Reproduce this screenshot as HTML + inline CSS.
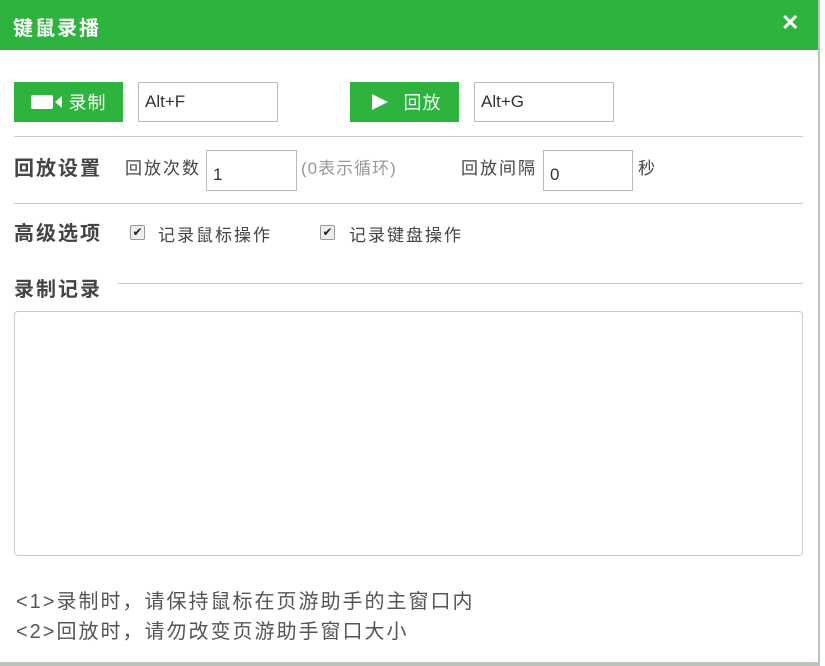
<!DOCTYPE html>
<html><head><meta charset="utf-8"><style>
body{margin:0;width:825px;height:666px;background:#fff;position:relative;overflow:hidden;font-family:"Liberation Sans","Noto Sans CJK SC",sans-serif;color:#333}
.a{position:absolute;white-space:nowrap}
.title{left:0;top:0;width:820px;height:50px;background:#2db33e}
.btn{background:#2db33e;color:#fff;height:40px;top:82px;width:109px;font-size:18px;letter-spacing:1px;display:flex;align-items:center;justify-content:center;gap:6px}
.inp{border:1px solid #bbb;background:#fff;box-sizing:border-box;font-size:17px;color:#333;padding-left:6px;display:flex;align-items:center}
.line{height:1px;background:#ccc}
.lbl{font-size:20px;letter-spacing:2px;font-weight:bold;color:#444;line-height:24px}
.t{font-size:17px;letter-spacing:2px;color:#444;line-height:22px}
.cb{width:13px;height:13px;border:1px solid #999;border-radius:2px;background:#eee;font-size:12px;line-height:13px;text-align:center;color:#222}
</style></head><body>
<div class="a title"></div>
<div class="a" style="left:13px;top:12px;color:#fff;font-size:20px;letter-spacing:2px;font-weight:bold">键鼠录播</div>
<div class="a" style="left:781px;top:10px;color:#fff;font-size:22px;font-weight:bold">✕</div>
<div class="a" style="left:818px;top:0;width:2px;height:666px;background:#b8c4b8"></div>
<div class="a" style="left:0;top:662px;width:820px;height:4px;background:#b8c4b8"></div>

<div class="a btn" style="left:14px"><svg width="32" height="16"><rect x="0" y="1" width="22" height="14" rx="2" fill="#fff"/><path d="M24 8 L31 2 V14 Z" fill="#fff"/></svg>录制</div>
<div class="a inp" style="left:138px;top:82px;width:140px;height:40px">Alt+F</div>
<div class="a btn" style="left:350px"><svg width="30" height="18"><path d="M4 1 L20 9 L4 17 Z" fill="#fff"/></svg>回放</div>
<div class="a inp" style="left:474px;top:82px;width:140px;height:40px">Alt+G</div>
<div class="a line" style="left:14px;top:136px;width:789px"></div>

<div class="a lbl" style="left:14px;top:157px">回放设置</div>
<div class="a t" style="left:125px;top:158px">回放次数</div>
<div class="a inp" style="left:206px;top:150px;width:91px;height:41px;padding-top:8px">1</div>
<div class="a t" style="left:301px;top:158px;color:#999;letter-spacing:1px">(0表示循环)</div>
<div class="a t" style="left:461px;top:158px">回放间隔</div>
<div class="a inp" style="left:543px;top:150px;width:90px;height:41px;padding-top:8px">0</div>
<div class="a t" style="left:638px;top:158px">秒</div>
<div class="a line" style="left:14px;top:203px;width:789px"></div>

<div class="a lbl" style="left:14px;top:222px">高级选项</div>
<div class="a cb" style="left:130px;top:225px">✔</div>
<div class="a t" style="left:158px;top:225px">记录鼠标操作</div>
<div class="a cb" style="left:320px;top:225px">✔</div>
<div class="a t" style="left:349px;top:225px">记录键盘操作</div>

<div class="a lbl" style="left:14px;top:278px">录制记录</div>
<div class="a line" style="left:118px;top:283px;width:685px"></div>
<div class="a" style="left:14px;top:311px;width:789px;height:245px;box-sizing:border-box;border:1px solid #ccc;border-radius:4px"></div>

<div class="a" style="left:16px;top:587px;font-size:20px;letter-spacing:2px;color:#555;line-height:30px">&lt;1&gt;录制时，请保持鼠标在页游助手的主窗口内<br>&lt;2&gt;回放时，请勿改变页游助手窗口大小</div>
</body></html>
